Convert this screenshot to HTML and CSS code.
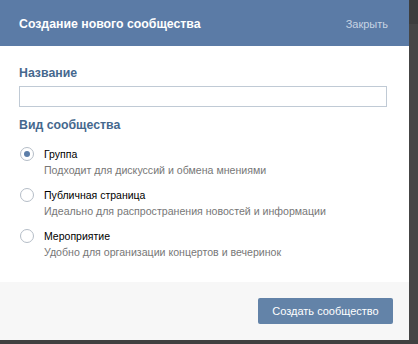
FILE: index.html
```html
<!DOCTYPE html>
<html>
  <head>
    <title>Создание нового сообщества</title>
    <link rel="stylesheet" href="styles.css">
  </head>
  <body>
    <div class="screen">
      <div class="box">
        <div class="box-header">
          <div class="box-title">Создание нового сообщества</div>
          <a class="box-close">Закрыть</a>
        </div>

        <div class="box-body">
          <div class="label">Название</div>
          <input class="text-input" type="text" />

          <div class="label label-type">Вид сообщества</div>

          <div class="radio-list">
            <div class="radio-item">
              <span class="radio checked"></span>
              <div class="radio-text">
                <div class="radio-name">Группа</div>
                <div class="radio-desc">Подходит для дискуссий и обмена мнениями</div>
              </div>
            </div>
            <div class="radio-item">
              <span class="radio"></span>
              <div class="radio-text">
                <div class="radio-name">Публичная страница</div>
                <div class="radio-desc">Идеально для распространения новостей и информации</div>
              </div>
            </div>
            <div class="radio-item">
              <span class="radio"></span>
              <div class="radio-text">
                <div class="radio-name">Мероприятие</div>
                <div class="radio-desc">Удобно для организации концертов и вечеринок</div>
              </div>
            </div>
          </div>
        </div>

        <div class="box-footer">
          <button class="button">Создать сообщество</button>
        </div>
      </div>
      <div class="side"></div>
    </div>
  </body>
</html>
```

FILE: styles.css
```css
* {
  margin: 0;
  padding: 0;
  box-sizing: border-box;
  font-family: Tahoma, "Liberation Sans", Arial, sans-serif;
}

body {
  background: #404040;
  width: 418px;
  height: 344px;
  overflow: hidden;
}

.screen {
  display: flex;
}

.box {
  width: 409px;
  background: #fff;
}

.side {
  flex: 1;
  border-top: 24px solid #3d3d3d;
  background: #454545;
}

.box-header {
  display: flex;
  justify-content: space-between;
  align-items: center;
  height: 46px;
  padding: 1px 21px 0 19px;
  background: #5b7ba6;
}

.box-title {
  color: #fff;
  font-size: 12.3px;
  font-weight: bold;
}

.box-close {
  color: #c7d3e3;
  font-size: 11px;
}

.box-body {
  padding: 20px 19px 20px 19px;
  height: 236px;
}

.label {
  color: #45688e;
  font-size: 12.3px;
  font-weight: bold;
  margin-bottom: 6px;
}

.label-type {
  margin-top: 11px;
  margin-bottom: 14px;
}

.text-input {
  display: block;
  width: 368px;
  height: 21px;
  border: 1px solid #c0cad5;
  outline: none;
}

.radio-list {
  display: flex;
  flex-direction: column;
  gap: 8px;
}

.radio-item {
  display: flex;
  align-items: flex-start;
}

.radio {
  width: 14px;
  height: 14px;
  margin: 1px 10px 0 1px;
  border: 1px solid #b5bdc7;
  border-radius: 50%;
  display: flex;
  align-items: center;
  justify-content: center;
  background: #fff;
}

.radio.checked::after {
  content: "";
  width: 6px;
  height: 6px;
  border-radius: 50%;
  background: #5d7ea8;
}

.radio-name {
  color: #000;
  font-size: 10.5px;
  line-height: 16px;
}

.radio-desc {
  color: #777;
  font-size: 10.6px;
  line-height: 17px;
}

.box-footer {
  display: flex;
  justify-content: flex-end;
  align-items: flex-start;
  height: 58px;
  padding: 16px 16px 0 0;
  background: #f7f7f7;
}

.button {
  width: 135px;
  height: 26px;
  border: none;
  border-radius: 2px;
  background: #6383a8;
  color: #fff;
  font-size: 11px;
}
```
